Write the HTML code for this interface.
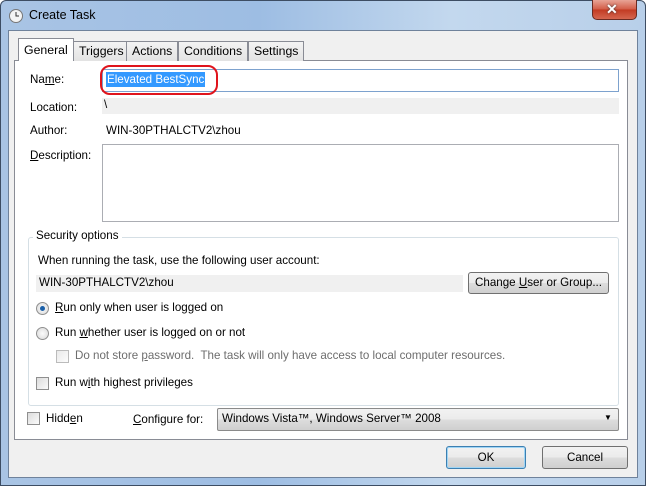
<!DOCTYPE html>
<html><head><style>
*{margin:0;padding:0;box-sizing:border-box}
body{width:646px;height:486px;overflow:hidden;font-family:"Liberation Sans",sans-serif;font-size:11.6px;color:#000;background:#fff}
.frame{position:absolute;left:0;top:0;width:646px;height:486px;background:linear-gradient(90deg,#a9c4e4 0%,#9dbde3 40%,#c3d8ee 70%,#b8cfe9 100%);border:1px solid #3d4d63;border-radius:6px 6px 0 0}
.client{position:absolute;left:8px;top:30px;width:630px;height:448px;background:#f0f0f0;border:1px solid #6f829b}
.a{position:absolute;white-space:nowrap}
.tab{position:absolute;top:41px;height:20px;border:1px solid #898c95;border-bottom:none;background:linear-gradient(#f3f3f3,#e3e3e3);padding:2px 5px;font-size:12.3px}
.panel{position:absolute;left:14px;top:60px;width:614px;height:380px;background:#fff;border:1px solid #898c95}
.input{position:absolute;background:#fff;border:1px solid #abadb3}
.gray{position:absolute;background:#f0f0f0}
.btn{position:absolute;border:1px solid #707070;border-radius:3px;background:linear-gradient(#f2f2f2 0%,#ebebeb 50%,#dddddd 51%,#cfcfcf 100%);text-align:center}
.cb{position:absolute;width:13px;height:13px;border:1px solid #8f8f8f;background:linear-gradient(135deg,#dcdcdc,#fbfbfb)}
.rb{position:absolute;width:13px;height:13px;border:1px solid #8f8f8f;border-radius:50%;background:radial-gradient(#fbfbfb,#d8d8d8)}
u{text-decoration:underline}
</style></head><body>
<div class="frame"></div>
<svg class="a" style="left:8px;top:8px" width="16" height="16"><circle cx="8" cy="8" r="6.5" fill="#f4f4f4" stroke="#777"/><path d="M8 4V8H11" stroke="#333" fill="none"/></svg>
<div class="a" style="left:29px;top:8px;font-size:12.5px">Create Task</div>
<div class="a" style="left:592px;top:0;width:45px;height:20px;border:1px solid #6b2b22;border-top:none;border-radius:0 0 5px 5px;background:linear-gradient(#e8a496,#d25a45 50%,#c23a22 51%,#d5664f)"></div>
<div class="a" style="left:606px;top:1px;color:#fff;font-weight:bold;font-size:14px;text-shadow:0 0 2px #333">✕</div>
<div class="client"></div>
<div class="panel"></div>
<div class="tab" style="left:18px;top:38px;height:23px;background:#fff;padding-top:4px;z-index:2">General</div>
<div class="tab" style="left:73px">Triggers</div>
<div class="tab" style="left:126px">Actions</div>
<div class="tab" style="left:178px">Conditions</div>
<div class="tab" style="left:248px">Settings</div>
<div class="a" style="left:30px;top:73px">Na<u>m</u>e:</div>
<div class="input" style="left:102px;top:69px;width:517px;height:23px;border-color:#7da2ce"></div>
<div class="a" style="left:106px;top:72px;background:#3399ff;color:#fff;padding:0 1px;line-height:15px">Elevated BestSync</div>
<div class="a" style="left:100px;top:65px;width:118px;height:30px;border:2px solid #e0141c;border-radius:10px"></div>
<div class="a" style="left:30px;top:101px">Location:</div>
<div class="gray" style="left:102px;top:98px;width:517px;height:16px"></div>
<div class="a" style="left:104px;top:98px">\</div>
<div class="a" style="left:30px;top:124px">Author:</div>
<div class="a" style="left:106px;top:124px">WIN-30PTHALCTV2\zhou</div>
<div class="a" style="left:30px;top:149px"><u>D</u>escription:</div>
<div class="input" style="left:102px;top:144px;width:517px;height:78px"></div>
<div class="a" style="left:28px;top:237px;width:591px;height:169px;border:1px solid #d5dfe5;border-radius:3px"></div>
<div class="a" style="left:33px;top:229px;background:#fff;padding:0 3px">Security options</div>
<div class="a" style="left:38px;top:254px">When running the task, use the following user account:</div>
<div class="gray" style="left:36px;top:275px;width:427px;height:17px"></div>
<div class="a" style="left:39px;top:276px">WIN-30PTHALCTV2\zhou</div>
<div class="btn" style="left:468px;top:272px;width:141px;height:22px;line-height:20px">Change <u>U</u>ser or Group...</div>
<div class="rb" style="left:36px;top:302px"></div><div class="a" style="left:40px;top:306px;width:5px;height:5px;border-radius:50%;background:#1a5fa8"></div>
<div class="a" style="left:55px;top:301px"><u>R</u>un only when user is logged on</div>
<div class="rb" style="left:36px;top:327px"></div>
<div class="a" style="left:55px;top:326px">Run <u>w</u>hether user is logged on or not</div>
<div class="cb" style="left:56px;top:350px;opacity:.6"></div>
<div class="a" style="left:75px;top:349px;color:#6d6d6d">Do not store <u>p</u>assword.&nbsp; The task will only have access to local computer resources.</div>
<div class="cb" style="left:36px;top:377px"></div>
<div class="a" style="left:55px;top:376px">Run w<u>i</u>th highest privileges</div>
<div class="cb" style="left:27px;top:412px"></div>
<div class="a" style="left:46px;top:412px">Hidd<u>e</u>n</div>
<div class="a" style="left:133px;top:413px"><u>C</u>onfigure for:</div>
<div class="btn" style="left:217px;top:408px;width:402px;height:23px;border-radius:2px;text-align:left;padding:3px 0 0 4px;border-color:#8a8a8a">Windows Vista™, Windows Server™ 2008</div>
<div class="a" style="left:604px;top:413px;font-size:8px">▼</div>
<div class="btn" style="left:446px;top:446px;width:80px;height:23px;line-height:21px;border-color:#3c7fb1;box-shadow:inset 0 0 0 1px #9fd5f5">OK</div>
<div class="btn" style="left:542px;top:446px;width:86px;height:23px;line-height:21px">Cancel</div>
</body></html>
